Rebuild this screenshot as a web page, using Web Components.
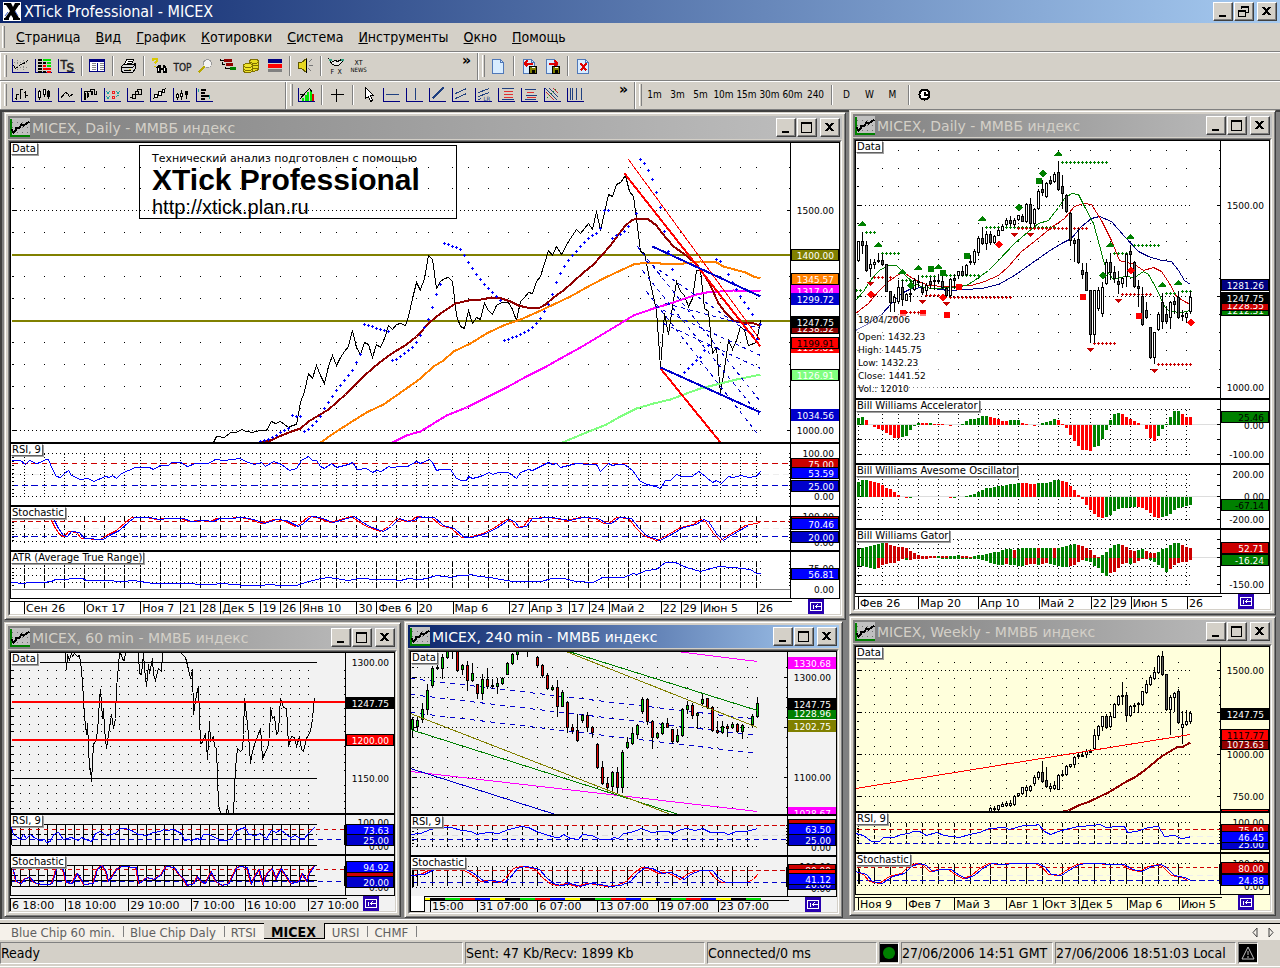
<!DOCTYPE html>
<html lang="ru">
<head>
<meta charset="utf-8">
<title>XTick Professional - MICEX</title>
<style>
  html, body { height: 100%; margin: 0; }
  body {
    --face: #d4d0c8;
    --light: #ffffff;
    --shadow: #808080;
    --dark: #404040;
    background: #d4d0c8;
    font-family: "DejaVu Sans Condensed", "DejaVu Sans", sans-serif;
    font-size: 14px;
    color: #000;
  }
</style>
</head>
<body>
<xt-app>
  <app-title slot="title">XTick Professional - MICEX</app-title>

  <menu-bar slot="menu">
    <button type="button"><u>С</u>траница</button>
    <button type="button"><u>В</u>ид</button>
    <button type="button"><u>Г</u>рафик</button>
    <button type="button"><u>К</u>отировки</button>
    <button type="button"><u>С</u>истема</button>
    <button type="button"><u>И</u>нструменты</button>
    <button type="button"><u>О</u>кно</button>
    <button type="button"><u>П</u>омощь</button>
  </menu-bar>

  <tool-row slot="tools">
    <tool-bar size="478" more>
      <tool-button icon="chart" label="Chart"></tool-button>
      <tool-button icon="quotes" label="Quotes"></tool-button>
      <tool-button icon="ts" label="Time and sales"></tool-button>
      <tool-gap></tool-gap>
      <tool-button icon="table" label="Table"></tool-button>
      <tool-gap></tool-gap>
      <tool-button icon="print" label="Print"></tool-button>
      <tool-gap></tool-gap>
      <tool-button icon="find" label="Find"></tool-button>
      <tool-button icon="top" label="Top"></tool-button>
      <tool-button icon="lens" label="Zoom"></tool-button>
      <tool-button icon="tree" label="Tree"></tool-button>
      <tool-button icon="coins" label="Portfolio"></tool-button>
      <tool-button icon="flag" label="Levels"></tool-button>
      <tool-gap></tool-gap>
      <tool-button icon="sound" label="Sound"></tool-button>
      <tool-gap></tool-gap>
      <tool-button icon="fx" label="FX"></tool-button>
      <tool-button icon="news" label="News"></tool-button>
    </tool-bar>
    <tool-bar>
      <tool-button icon="doc" label="New page"></tool-button>
      <tool-gap></tool-gap>
      <tool-button icon="docLoad" label="Load page"></tool-button>
      <tool-button icon="docSave" label="Save page"></tool-button>
      <tool-gap></tool-gap>
      <tool-button icon="docDrop" label="Delete page"></tool-button>
    </tool-bar>
  </tool-row>

  <tool-row slot="tools">
    <tool-bar size="286">
      <tool-button icon="bars" label="Bars"></tool-button>
      <tool-button icon="candles" label="Candles"></tool-button>
      <tool-button icon="line" label="Line"></tool-button>
      <tool-button icon="steps" label="Steps"></tool-button>
      <tool-button icon="xo" label="Point and figure"></tool-button>
      <tool-button icon="kagi" label="Kagi"></tool-button>
      <tool-button icon="renko" label="Renko"></tool-button>
      <tool-button icon="diamonds" label="Line break"></tool-button>
      <tool-button icon="profile" label="Profile"></tool-button>
    </tool-bar>
    <tool-bar size="349" more>
      <tool-button icon="indicator" label="Indicators"></tool-button>
      <tool-gap></tool-gap>
      <tool-button icon="cross" label="Crosshair"></tool-button>
      <tool-gap></tool-gap>
      <tool-button icon="pointer" label="Pointer"></tool-button>
      <tool-button icon="hline" label="Horizontal line"></tool-button>
      <tool-button icon="vline" label="Vertical line"></tool-button>
      <tool-button icon="trend" label="Trend line"></tool-button>
      <tool-button icon="channel" label="Channel"></tool-button>
      <tool-button icon="regress" label="Regression"></tool-button>
      <tool-button icon="fib" label="Retracement"></tool-button>
      <tool-button icon="fibx" label="Extension"></tool-button>
      <tool-button icon="fan" label="Fan"></tool-button>
      <tool-button icon="zones" label="Time zones"></tool-button>
    </tool-bar>
    <tool-bar>
      <tool-button>1m</tool-button>
      <tool-button>3m</tool-button>
      <tool-button>5m</tool-button>
      <tool-button>10m</tool-button>
      <tool-button>15m</tool-button>
      <tool-button>30m</tool-button>
      <tool-button>60m</tool-button>
      <tool-button>240</tool-button>
      <tool-gap></tool-gap>
      <tool-button>D</tool-button>
      <tool-button>W</tool-button>
      <tool-button>M</tool-button>
      <tool-gap></tool-gap>
      <tool-button icon="clock" label="Custom period"></tool-button>
    </tool-bar>
  </tool-row>

  <chart-window slot="daily" caption="MICEX, Daily - ММВБ индекс">
    <price-chart chart="daily"><chart-banner></chart-banner></price-chart>
  </chart-window>
  <chart-window slot="min60" caption="MICEX, 60 min - ММВБ индекс">
    <price-chart chart="min60"></price-chart>
  </chart-window>
  <chart-window slot="min240" caption="MICEX, 240 min - ММВБ индекс" active>
    <price-chart chart="min240"></price-chart>
  </chart-window>
  <chart-window slot="williams" caption="MICEX, Daily - ММВБ индекс">
    <price-chart chart="williams"><bar-info></bar-info></price-chart>
  </chart-window>
  <chart-window slot="weekly" caption="MICEX, Weekly - ММВБ индекс">
    <price-chart chart="weekly"></price-chart>
  </chart-window>

  <page-tabs slot="footer"></page-tabs>
  <status-bar slot="footer"></status-bar>
</xt-app>

<script>
// ---------------------------------------------------------------- helpers

function define(name, html, setup) {
  const template = document.createElement('template');
  template.innerHTML = html;
  customElements.define(name, class extends HTMLElement {
    constructor() {
      super();
      this.attachShadow({ mode: 'open' });
      this.shadowRoot.appendChild(template.content.cloneNode(true));
    }
    connectedCallback() {
      if (setup) setup(this, this.shadowRoot);
    }
  });
}

// Series are stored on a grid three times finer than the pixels.
function points(ox, oy, text) {
  return text.trim().split(/\s+/).map((pair) => {
    const [x, y] = pair.split(',').map(Number);
    return [Math.floor(ox + x / 3), Math.floor(oy + y / 3)];
  });
}
const scale = (o, list) => list.map((v) => Math.floor(o + v / 3));

const poly = (color, width, pts, dash = '') =>
  `<polyline points="${pts.map((p) => p.join()).join(' ')}" stroke="${color}" stroke-width="${width}" stroke-dasharray="${dash}"/>`;
const hline = (color, y, x1, x2, dash = '', width = 1) =>
  `<path d="M${x1} ${y}H${x2}" stroke="${color}" stroke-dasharray="${dash}" stroke-width="${width}"/>`;
const vlines = (xs, y1, y2, dash = '') =>
  `<path d="${xs.map((x) => `M${x} ${y1}V${y2}`).join('')}" stroke="#000" stroke-dasharray="${dash}"/>`;
const dots = (xs, ys) =>
  `<path d="${ys.map((y) => xs.map((x) => `M${x - 0.5} ${y}h1`).join('')).join('')}" stroke="#000"/>`;
const hdots = (ys, x1, x2) => ys.map((y) => hline('#000', y, x1 - 0.5, x2, '1 3')).join('');
const pluses = (color, pts) =>
  `<path d="${pts.map(([x, y]) => `M${x - 1.5} ${y}h3M${x} ${y - 1.5}v3`).join('')}" stroke="${color}"/>`;
const ticks = (ys, left, right, len = 3) =>
  `<path d="${ys.map((y) => `M${left} ${y}h${len}M${right - len} ${y}h${len}`).join('')}" stroke="#000"/>`;
const shift = (pts, dx) => pts.map(([x, y], i) => [i ? x + dx : x, y]);

// One candle per item: x,high,top,bottom,low and a fill letter.
const FILLS = { w: '#fff', b: '#606060', g: '#00d400', r: '#e00000' };
function candles(ox, oy, text) {
  return text.trim().split(/\s+/).map((item) => {
    const f = item.split(',');
    const [x] = scale(ox, [f[0]]);
    const [h, t, b, l] = scale(oy, f.slice(1, 5));
    return `<path d="M${x} ${h - 0.5}V${l + 0.5}" stroke="#000"/>` +
      `<rect x="${x - 1}" y="${t}" width="2" height="${Math.max(1, b - t)}" fill="${FILLS[f[5]]}" stroke="#000"/>`;
  }).join('');
}

// Histogram: green while the value grows, red while it falls.
function histogram(zero, text, red, grows) {
  let prev = null;
  let color = '#008000';
  return text.trim().split(/\s+/).map(Number).map((v, i) => {
    if (prev !== null && v !== prev) color = grows(v, prev) ? '#008000' : red;
    prev = v;
    const x = 858 + i * 4;
    const y = Math.floor(395 + v / 3);
    const z = Math.floor(395 + zero / 3);
    if (y === z) return '';
    return `<path d="M${x} ${z}V${y}" stroke="${color}" stroke-width="3"/>`;
  }).join('');
}

const up = (x, y) => `<path d="M${x} ${y - 3}L${x + 4} ${y + 2}H${x - 4}Z" fill="#008000"/>`;
const down = (x, y) => `<path d="M${x} ${y + 3}L${x + 4} ${y - 2}H${x - 4}Z" fill="#c80000"/>`;
const square = (color) => (x, y) => `<rect x="${x - 3}" y="${y - 3}" width="6" height="6" fill="${color}"/>`;
const diamond = (color) => (x, y) => `<path d="M${x} ${y - 4}l4 4l-4 4l-4 -4Z" fill="${color}"/>`;
const marks = (shape, pts) => pts.map(([x, y]) => shape(x, y)).join('');

const BLUE = '#0000ff';
const NAVY = '#0000cc';
const RED = '#ff0000';
const CRIMSON = '#cc0000';
const MAROON = '#900000';
const OLIVE = '#808000';
const MAGENTA = '#ff00ff';

// ---------------------------------------------------------------- charts

const CHARTS = {};

(function daily() {
  const a = (s) => points(0, 110, s);
  const b = (s) => points(420, 110, s);
  const c = (s) => points(0, 436, s);
  const d = (s) => points(420, 436, s);
  const xs = [24, 44, 64, 84, 104, 124, 140, 160, 180, 200, 220, 240, 260, 280, 300, 320, 336, 356, 376, 396,
    416, 428, 452, 468, 488, 508, 528, 548, 568, 588, 608, 628, 640, 660, 680, 700, 720, 740, 756];
  const ys = [167, 188, 232, 276, 298, 342, 364, 386, 408];

  const price = a(`640,996 649,978 673,981 691,968 709,966 723,957 740,963 757,967 778,960 800,962 815,935 825,940
    842,934 852,943 866,952 878,946 889,944 901,876 913,845 925,790 937,806 949,765 961,796 973,820 985,770 997,736
    1009,766 1021,743 1033,724 1045,710 1057,662 1069,712 1081,732 1093,697 1105,704 1117,741 1129,703 1141,712
    1153,685 1165,647 1177,658 1189,644 1201,640 1216,645 1225,620 1237,565 1249,518 1261,540`).concat(b(`2,537
    12,505 25,437 38,448 50,535 62,513 74,505 86,502 98,515 108,615 122,648 132,655 146,600 158,640 170,622 182,627
    193,580 205,600 217,612 230,587 245,577 265,577 278,597 290,630 302,573 313,562 325,546 338,550 350,515 362,498
    374,460 386,422 397,436 410,410 424,434 445,395 469,358 481,370 505,341 517,357 530,303 541,362 553,307 565,252
    578,258 590,224 602,217 615,195 627,243 640,260 650,325 660,425 672,430 690,520 710,600 722,772 733,610 746,673
    758,590 769,513 781,543 793,556 806,590 818,565 830,480 842,482 854,595 866,605 878,730 890,712 902,850 914,775
    926,690 938,718 950,690 962,650 974,660 986,706 1008,697 1022,632`));
  const fast = a(`780,998 810,992 845,975 875,963 900,956 925,935 955,917 985,898 1010,876 1035,853 1060,828
    1090,800 1120,772 1150,748 1180,728 1220,704 1250,680`).concat(b(`0,668 25,640 50,620 80,597 105,580 145,571
    185,567 215,561 245,565 270,573 295,587 320,592 355,594 375,584 400,563 430,542 460,515 490,488 520,463 545,435
    570,405 595,372 615,347 635,332 650,324 685,327 710,345 725,368 760,408 790,430 825,460 845,482 870,525 895,580
    915,608 940,632 965,636 990,636 1020,646`));
  const mid = a('960,998 1000,970 1050,937 1100,907 1150,882 1190,855 1240,820').concat(b(`0,805 40,770 70,750
    100,725 150,700 200,670 250,645 300,628 350,607 400,583 450,558 500,533 550,506 600,480 640,464 680,458 720,461
    790,459 840,454 890,457 910,469 975,486 1000,498 1022,504`));
  const slow = a('1178,998 1220,977 1250,966').concat(b(`0,963 40,940 80,917 140,893 200,862 260,832 320,800
    380,770 420,745 480,713 540,675 600,640 640,615 700,594 760,577 830,552 860,547 940,542 1022,543`));
  const long = b('428,998 500,966 560,942 600,920 650,896 700,880 750,868 800,850 840,834 900,820 950,808 1022,794');
  const sar = a(`780,994 792,992 804,988 817,982 830,975 842,968 854,962 866,956 878,916 890,919 902,919 913,964
    925,958 937,946 949,934 961,918 973,895 985,877 997,859 1009,841 1021,826 1033,811 1045,796 1057,781 1069,757
    1081,734 1093,643 1105,646 1117,650 1129,655 1141,658 1153,661 1165,664 1177,751 1189,748 1201,739 1213,730
    1225,721 1237,712 1249,697 1261,676 1273,652 1285,628`).concat(b(`2,676 14,652 38,592 50,553 62,523 74,400
    86,403 98,408 110,411 122,418 133,436 145,457 157,475 170,493 182,508 194,523 206,535 218,547 230,559 242,571
    253,691 265,688 277,682 289,679 301,673 313,667 325,661 338,652 350,640 361,625 373,604 385,583 397,553 409,517
    421,490 433,469 445,451 458,436 470,424 482,409 494,397 506,385 518,376 530,370 542,355 554,301 566,301 578,385
    590,376 602,373 614,364 626,349 650,310 662,148 674,160 686,181 698,208 710,247 722,292 734,364 746,425 758,478
    782,799 794,787 806,775 818,763 830,751 842,742 854,721 866,706 890,448 902,454 926,493 938,517 950,538 962,559
    974,577 986,595 998,613 1010,688 1022,643`));
  const fan = ['653,410 1018,870', '668,480 1018,915', '680,545 1018,980', '676,450 1020,690', '705,590 1020,735',
    '735,580 1020,655', '730,640 1020,775'];
  const rsi = c(`35,73 60,73 75,85 88,72 108,83 122,80 135,70 145,69 157,100 170,120 180,124 193,112 205,103
    215,118 240,129 265,127 280,136 315,122 328,124 338,118 350,126 365,112 405,94 448,93 460,99 482,88 505,87
    515,80 540,79 562,91 585,82 625,82 645,70 672,72 718,67 745,79 763,84 783,80 795,91 820,77 845,84 867,102
    890,97 903,73 925,60 937,73 950,72 962,90 972,96 993,83 1010,93 1045,86 1057,80 1072,99 1098,96 1118,110
    1130,104 1145,106 1165,90 1175,95 1200,90 1222,90 1250,77 1262,83`).concat(d(`0,83 27,71 38,79 50,104 62,99
    92,99 110,127 125,133 138,133 146,121 158,127 182,120 207,110 217,115 235,108 265,108 290,127 302,108 325,99
    337,103 362,92 385,78 398,86 410,82 422,93 445,88 470,82 505,86 528,85 541,107 566,83 577,89 590,85 614,85
    637,104 662,135 683,145 705,150 721,157 735,133 750,132 770,115 783,121 817,122 835,107 842,108 878,138 890,132
    903,143 926,120 938,125 965,117 985,123 1008,120 1022,107`));
  const stoch = c(`35,248 150,248 165,278 180,297 193,301 205,287 228,288 243,306 300,310 320,298 350,282 375,258
    395,243 440,243 470,250 500,247 540,246 565,257 600,254 630,257 650,246 680,248 720,243 750,251 785,262 820,250
    850,253 885,272 900,262 925,240 950,245 990,260 1020,250 1055,242 1075,256 1100,270 1140,287 1165,272 1190,248
    1215,255 1235,252 1250,242`).concat(d(`0,244 35,244 60,268 95,278 125,303 145,303 180,295 220,278 260,250
    275,255 290,275 310,272 327,248 385,244 440,254 480,243 525,247 550,261 565,262 590,245 625,248 645,275 670,297
    710,313 725,308 780,273 820,265 842,250 855,256 880,293 902,312 920,300 975,268 1022,260`));
  const atr = c(`35,439 70,441 85,439 130,438 155,435 165,430 200,431 215,427 248,427 258,432 310,433 370,437
    400,433 460,441 565,442 600,446 640,445 665,442 700,444 735,447 780,447 808,445 840,448 890,448 915,438 950,429
    985,424 1045,433 1075,427 1135,431 1170,430 1200,433 1225,428 1250,430`).concat(d(`0,429 20,428 50,418 95,424
    115,418 140,419 155,414 175,421 210,424 240,430 280,435 325,436 365,436 395,427 430,428 470,436 520,440 548,424
    610,425 640,412 650,414 680,402 710,400 735,379 765,380 800,395 840,405 895,391 940,393 990,400 1010,411
    1022,412`));

  CHARTS.daily = {
    left: 11, width: 779, background: '#fff',
    panes: [
      {
        top: 143, height: 299, tag: 'Data',
        art: dots(xs, ys) + hdots([210, 430], 12, 762) + ticks([167, 188, 232, 254, 276, 298, 342, 364, 386, 408], 11, 790, 2) +
          ticks([210, 430], 11, 790, 4) +
          hline(OLIVE, 254, 11, 790, '', 2) + hline(OLIVE, 320, 11, 790, '', 2) +
          poly('#000', 1, price) + poly('#80ff80', 2, long) + poly(MAGENTA, 2, slow) + poly('#ff8000', 2, mid) +
          poly(MAROON, 2, fast) + pluses(BLUE, sar) +
          fan.map((s) => poly(NAVY, 1, b(s), '4 4')).join('') +
          poly(RED, 2, b('613,190 1022,710')) + poly(RED, 2, b('722,775 900,998')) + poly(RED, 1, b('625,148 1022,690')) +
          poly(NAVY, 2, b('697,410 1022,558')) + poly(NAVY, 2, b('722,773 1022,908')),
        labels: [[210, '1500.00'], [255, '1400.00', OLIVE, '#fff', 1], [279, '1345.57', '#ff8000', '#fff', 1],
          [291, '1317.94', MAGENTA, '#fff'], [299, '1299.72', NAVY, '#fff'], [328, '1238.52', MAROON, '#fff', 1],
          [322, '1247.75', '#000', '#fff'], [347, '1199.81', RED, '#fff'], [343, '1199.91', RED, '#000', 1],
          [375, '1126.91', '#80ff80', '#fff', 1], [415, '1034.56', NAVY, '#fff'], [430, '1000.00']],
      },
      {
        top: 444, height: 61, tag: 'RSI, 9',
        art: vlines(xs, 453, 497, '1 2') + hdots([453, 474, 496], 12, 762) + hline('#eee', 474, 12, 790, '6 4') +
          hline(CRIMSON, 463, 11, 790, '6 4') + hline(NAVY, 485, 11, 790, '6 4') +
          ticks([453, 457, 461, 465, 469, 473, 477, 481, 485, 489, 493, 496], 11, 790, 2) + poly(BLUE, 1, rsi),
        labels: [[453, '100.00'], [464, '75.00', CRIMSON, '#fff', 1], [473, '53.59', BLUE, '#fff', 1],
          [486, '25.00', NAVY, '#fff', 1], [496, '0.00']],
      },
      {
        top: 507, height: 43, tag: 'Stochastic',
        art: vlines(xs, 516, 542, '5 3') + hdots([516, 534, 541], 12, 762) + hline('#eee', 528, 12, 790, '6 4') +
          hline(CRIMSON, 521, 11, 790, '5 3') + hline(NAVY, 536, 11, 790, '6 4') +
          ticks([516, 519, 522, 525, 528, 531, 534, 537, 540], 11, 790, 2) +
          poly(RED, 1, stoch) + poly(BLUE, 1, shift(stoch, 3).slice(0, -1)),
        labels: [[516, '100.00'], [522, '', CRIMSON, '#fff', 1], [542, '0.00'], [524, '70.46', BLUE, '#fff', 1],
          [537, '20.00', NAVY, '#fff', 1]],
      },
      {
        top: 552, height: 46, tag: 'ATR (Average True Range)',
        art: vlines(xs, 561, 588, '5 2') + hdots([561, 568, 575, 582], 12, 762) + hline('#808080', 589, 11, 790) +
          ticks([561, 564, 568, 572, 575, 578, 582, 585], 11, 790, 2) + poly(BLUE, 1, atr),
        labels: [[568, '75.00'], [574, '56.81', BLUE, '#fff', 1], [589, '0.00']],
      },
    ],
    times: [[24, 'Сен 26'], [84, 'Окт 17'], [140, 'Ноя 7'], [180, '21'], [200, '28'], [220, 'Дек 5'], [260, '19'],
      [280, '26'], [300, 'Янв 10'], [356, '30'], [376, 'Фев 6'], [416, '20'], [452, 'Мар 6'], [508, '27'],
      [528, 'Апр 3'], [568, '17'], [588, '24'], [608, 'Май 2'], [660, '22'], [680, '29'], [700, 'Июн 5'], [756, '26']],
  };
})();

(function williams() {
  const p = (s) => points(848, 110, s);
  const xs = scale(848, [31, 103, 151, 211, 271, 331, 391, 451, 511, 571, 631, 667, 727, 787, 847, 907, 955, 1015]);
  const minor = scale(110, [121, 175, 229, 340, 394, 449, 505, 613, 667, 721, 778]);
  const major = scale(110, [286, 558, 832]);
  // Fractal levels: y, first x, last x
  const levels = (color, list) => list.map(([y, x1, x2]) => {
    const row = [];
    for (let x = x1; x <= x2; x += 12) row.push(`${x},${y}`);
    return pluses(color, p(row.join(' ')));
  }).join('');
  const grid = (ys, zero) => {
    const rows = scale(395, ys);
    return vlines(xs, rows[0], rows[rows.length - 1], '1 3') + hdots(rows, 857, 1192) +
      hline('#ddd', Math.floor(395 + zero / 3), 857, 1219) + ticks(rows, 856, 1220, 4);
  };
  const higher = (v, prev) => v < prev;

  CHARTS.williams = {
    left: 856, width: 364, background: '#fff',
    panes: [
      {
        top: 141, height: 257, tag: 'Data',
        art: dots(xs, minor) + hdots(major, 857, 1192) + ticks(minor, 856, 1220, 2) + ticks(major, 856, 1220, 4) +
          poly('#000080', 1, p(`22,662 60,640 100,612 130,580 160,550 190,535 230,533 300,541 400,535 450,523 500,495
            550,460 600,425 640,400 670,385 700,350 730,325 755,319 790,335 830,380 870,425 900,440 940,450 970,455
            990,480 1010,510 1027,523`)) +
          poly('#c80000', 1, p(`22,610 60,580 90,545 120,515 150,492 165,488 200,508 240,525 290,529 370,526 410,515
            450,495 480,468 520,425 560,395 610,353 650,325 680,290 705,280 730,284 760,330 790,390 815,450 860,462
            885,480 915,472 940,485 965,520 985,558 1010,575 1027,582`)) +
          poly('#008000', 1, p(`22,572 45,545 60,520 75,500 95,480 120,466 145,466 158,478 175,498 200,520 225,532
            260,536 320,532 355,525 380,512 420,482 450,450 500,400 540,365 570,340 600,330 630,292 650,265 670,250
            690,253 710,290 735,340 755,405 765,450 780,490 795,508 830,500 860,503 885,484 900,492 925,535 950,590
            965,604 1000,606 1027,600`)) +
          levels('#008000', [[367, 55, 82], [430, 103, 155], [511, 163, 200], [499, 223, 270], [496, 283, 395],
            [352, 415, 630], [157, 643, 780], [430, 799, 835], [406, 859, 935], [550, 955, 990], [544, 1003, 1029],
            [541, 25, 37]]) +
          levels('#c80000', [[502, 79, 135], [607, 163, 220], [556, 235, 290], [562, 307, 490], [355, 511, 720],
            [700, 739, 800], [553, 823, 910], [763, 931, 1030]]) +
          candles(848, 110, `31,393,395,452,455,w 43,367,393,405,430,b 55,393,406,482,485,b 67,448,463,475,500,w
            79,448,457,463,475,w 91,430,450,454,457,b 103,433,451,463,465,b 115,463,464,544,545,b
            127,544,545,577,605,b 139,553,562,577,605,w 151,512,533,574,580,w 163,510,532,569,585,b
            175,550,554,570,572,w 187,515,550,553,573,b 199,505,511,538,540,w 211,497,515,518,530,b
            223,518,536,546,553,b 235,520,526,542,553,w 247,502,515,522,535,b 259,502,512,515,537,b
            271,493,510,513,520,b 283,490,513,533,535,b 295,533,534,556,558,b 307,505,508,555,560,w
            319,492,506,510,535,b 331,484,485,497,505,w 343,470,484,495,497,b 355,462,465,494,497,w
            367,437,455,458,462,b 379,417,425,456,462,w 391,380,385,426,437,w 403,352,384,401,403,b
            415,364,374,401,418,w 427,363,374,398,403,b 439,375,380,398,400,w 451,355,362,377,377,w
            463,343,348,360,360,w 475,325,331,342,345,w 487,320,331,341,345,b 499,325,332,343,350,w
            511,315,317,328,330,w 523,313,319,333,335,b 535,280,284,334,336,w 547,265,284,340,353,b
            559,295,298,340,350,w 571,238,244,296,298,w 583,212,237,248,256,b 595,217,220,259,262,w
            607,200,212,220,223,b 619,187,194,214,217,w 631,155,186,238,240,b 643,197,228,250,295,b
            655,253,256,304,307,b 667,308,310,391,406,b 679,385,391,400,455,b 691,355,388,457,460,b
            703,460,481,493,505,b 715,460,487,541,541,b 727,541,541,673,698,b 739,541,541,673,698,w
            751,533,541,595,600,w 763,517,532,610,620,w 775,448,457,521,523,w 787,430,457,487,508,b
            799,470,487,505,517,b 811,484,515,524,550,b 823,502,506,520,533,w 835,430,433,499,529,w
            847,406,424,433,470,b 859,455,457,529,531,b 871,512,529,535,589,b 883,532,560,643,645,b
            895,577,601,622,625,b 907,652,653,742,744,b 919,667,668,742,760,w 931,608,612,657,660,w
            943,550,577,634,655,b 955,589,612,634,640,b 967,573,577,622,655,w 979,562,574,584,610,b
            991,544,562,622,624,b 1003,600,616,619,630,b 1015,607,610,622,636,w 1027,544,562,604,610,w`) +
          marks(up, p('43,340 91,404 163,484 211,473 271,468 403,326 631,130 787,404 847,380 943,523 991,518')) +
          marks(down, p('67,519 139,622 223,573 295,579 499,372 547,372 727,717 811,570 919,780')) +
          marks(square('#008000'), p('246,476 283,486 354,437 570,212')) +
          marks(diamond('#008000'), p('187,526 511,292 583,190 763,496')) +
          marks(square('#ff0000'), p('162,608 222,606 294,612 330,530 702,558 870,615')) +
          marks(diamond('#ff0000'), p('67,552 283,562 451,403 847,481 1027,637')),
        labels: [[205, '1500.00'], [285, '1281.26', '#000080', '#fff', 1], [310, '1212.31', '#008000', '#fff', 1],
          [305, '1228.55', CRIMSON, '#fff', 1], [298, '1247.75', '#000', '#fff'], [387, '1000.00']],
      },
      {
        top: 400, height: 63, tag: 'Bill Williams Accelerator',
        art: grid([43, 88, 133, 178], 88) + histogram(88, `
          66 64 72 88 93 99 104 111 117 126
          126 125 120 104 91 81 82 82 81 84
          84 84 88 90 89 87 84 76 70 69
          66 60 60 63 66 69 75 75 74 74
          74 81 84 87 91 88 82 78 75 69
          72 84 96 117 137 150 162 162 165 155
          150 129 104 72 54 51 54 63 69 75
          81 88 101 126 135 122 101 84 63 45
          45 54 63 63`, RED, higher),
        labels: [[425, '0.00'], [417, '25.46', '#008000', '#000', 1], [454, '-100.00']],
      },
      {
        top: 465, height: 63, tag: 'Bill Williams Avesome Oscillator',
        art: grid([238, 271, 303, 337, 373], 303) + histogram(303, `
          260 252 252 256 258 261 267 276 281 290
          297 303 308 306 305 303 303 303 303 303
          303 303 303 307 306 305 303 300 297 294
          289 282 278 276 273 270 270 268 265 264
          262 263 263 264 264 263 262 261 259 253
          252 256 259 271 282 297 310 327 342 354
          363 366 364 357 347 341 338 336 334 333
          334 337 342 353 365 366 363 362 354 343
          337 333 330 327`, RED, higher),
        labels: [[474, '200.00'], [496, '0.00'], [505, '-67.14', '#008000', '#000', 1], [519, '-200.00']],
      },
      {
        top: 530, height: 63, tag: 'Bill Williams Gator',
        art: grid([433, 460, 486, 515, 541, 568], 486) + histogram(486, `
          460 456 453 450 447 444 438 441 447 450
          454 454 457 465 473 478 480 481 481 481
          480 481 481 480 480 477 480 480 483 480
          478 477 474 471 470 468 462 461 460 462
          460 458 457 456 456 457 456 456 456 457
          456 453 450 447 446 447 450 457 464 477
          483 477 468 456 447 444 447 453 462 465
          462 461 465 471 472 468 460 456 447 441
          441 447 453 456`, CRIMSON, higher) + histogram(486, `
          510 512 514 516 519 516 508 504 503 502
          495 490 494 492 491 491 490 489 488 488
          488 489 489 489 489 489 489 489 489 490
          490 494 497 501 506 507 507 504 507 508
          510 510 507 506 505 507 504 502 504 508
          512 513 514 511 507 498 492 497 500 510
          518 531 540 533 528 516 505 502 504 502
          496 490 489 494 500 507 516 528 519 508
          503 500 498 492`, CRIMSON, (v, prev) => v > prev),
        labels: [[548, '52.71', CRIMSON, '#fff', 1], [560, '-16.24', '#008000', '#fff', 1], [584, '-150.00']],
      },
    ],
    times: [[858, 'Фев 26'], [918, 'Мар 20'], [978, 'Апр 10'], [1038, 'Май 2'], [1090, '22'], [1110, '29'],
      [1130, 'Июн 5'], [1186, '26']],
  };
})();

(function min60() {
  const p = (s) => points(0, 618, s);
  const xs = [];
  for (let x = 11; x < 312; x += 9) xs.push(x);
  const ys = scale(618, [157, 181, 206, 228, 271, 295, 319, 341, 386, 410, 433, 458, 502, 527, 549, 572]);
  const osc = p(`38,745 45,790 60,795 72,780 88,778 100,793 120,800 145,800 155,795 165,755 175,748 188,755 195,793
    215,795 230,765 250,798 278,796 290,755 303,743 315,760 322,790 335,775 350,750 365,745 405,748 415,795 440,778
    460,785 480,770 495,745 520,747 535,770 550,785 560,802 580,795 590,775 600,790 612,795 630,762 645,790 665,802
    685,795 705,750 715,745 740,748 750,795 765,770 775,755 788,795 800,765 815,752 825,780 840,750 855,775 870,795
    895,790 903,765 918,790 925,765 940,745`);

  CHARTS.min60 = {
    left: 11, width: 334, background: '#f2f2f2',
    panes: [
      {
        top: 653, height: 160, tag: 'Data',
        art: dots(xs, ys) + ticks(ys, 11, 345, 2) + hline('#000', 662, 39, 316) + hline('#000', 778, 11, 316) +
          poly('#000', 1, p(`196,105 199,155 203,112 208,125 214,105 218,115 224,105 232,115 238,112 243,155 249,240
            254,295 258,350 262,315 268,455 272,450 275,490 280,380 288,365 294,300 298,240 302,213 306,300 309,272
            314,330 320,390 325,350 335,290 340,330 345,300 350,210 358,105 365,108 368,125 373,128 375,100`)) +
          poly('#000', 1, p(`415,105 418,165 424,170 430,105 434,150 438,205 444,140 449,165 456,122 461,170 466,188
            475,150 483,160 488,105`)) +
          poly('#000', 1, p(`545,105 556,118 565,155 572,180 577,155 581,290 590,230 596,205 600,375 608,372 616,345
            620,378 623,425 628,310 632,370 641,355 644,385 650,390 654,560 660,585 678,585 682,563 685,585 701,585
            705,450 712,390 720,400 727,395 731,350 733,240 738,290 745,350 750,435 758,400 765,370 772,355 780,330
            785,370 788,425 795,400 803,390 808,360 811,268 817,300 824,295 830,350 836,340 842,240 850,268 858,272
            862,320 866,385 875,355 884,358 890,385 897,355 903,395 910,400 918,362 930,340 936,300 943,240`)) +
          hline(RED, 701, 11, 345, '', 2) + hline(RED, 739, 11, 345, '', 2),
        labels: [[662, '1300.00'], [703, '1247.75', '#000', '#fff'], [740, '1200.00', RED, '#fff', 1],
          [778, '1150.00']],
      },
      {
        top: 815, height: 39, tag: 'RSI, 9',
        art: vlines(xs, 824, 844) + hline('#000', 824, 11, 316) + hline('#000', 834, 11, 316, '5 3') +
          hline('#000', 845, 11, 316) + hline(CRIMSON, 829, 11, 345, '4 4') + hline(NAVY, 839, 11, 345, '5 4') +
          hline('#000', 834, 343, 345, '', 20) +
          poly(BLUE, 1, p(`35,628 40,650 50,655 62,665 70,650 80,660 90,650 105,660 120,668 132,664 138,672 150,670
            160,648 175,643 190,665 200,660 215,658 225,664 235,667 245,658 255,664 265,668 275,670 285,645 300,640
            320,652 345,645 360,630 375,630 395,637 415,650 440,653 460,643 480,640 490,633 500,638 520,635 545,645
            552,668 565,664 575,668 590,660 600,664 610,650 625,648 640,655 660,668 680,667 695,660 705,640 725,632
            735,628 745,650 765,652 780,645 790,655 800,660 815,638 830,643 842,635 860,650 870,658 885,652 900,660
            912,660 925,645 944,628`)),
        labels: [[822, '100.00'], [846, '0.00'], [830, '73.63', BLUE, '#fff', 1], [840, '25.00', NAVY, '#fff', 1]],
      },
      {
        top: 856, height: 39, tag: 'Stochastic',
        art: vlines(xs, 865, 885) + hline('#000', 865, 11, 316) + hline('#000', 875, 11, 316, '6 3') +
          hline('#000', 880, 11, 316) + hline('#000', 886, 11, 316) + hline(CRIMSON, 869, 11, 345, '4 4') +
          hline(NAVY, 881, 11, 345, '5 4') + hline('#000', 875, 343, 345, '', 20) +
          poly(RED, 1, osc) + poly(BLUE, 1, shift(osc, 1)),
        labels: [[887, '0.00'], [872, '', CRIMSON, '#fff', 1], [867, '94.92', BLUE, '#fff', 1],
          [882, '20.00', NAVY, '#fff', 1]],
      },
    ],
    times: [[10, '6 18:00'], [65, '18 10:00'], [128, '29 10:00'], [190, '7 10:00'], [244, '16 10:00'],
      [307, '27 10:00']],
  };
})();

(function min240() {
  const p = (s) => points(400, 618, s);
  const xs = [];
  for (let x = 417; x < 750; x += 15) xs.push(x);
  const minor = scale(618, [148, 208, 238, 268, 298, 358, 388, 418, 448, 508, 538, 568]);
  const major = scale(618, [178, 328, 478]);
  const osc = p(`32,773 60,770 90,755 120,750 155,745 180,752 215,770 240,790 265,788 300,792 315,780 340,750
    360,745 385,748 405,755 430,780 455,798 475,803 500,796 530,805 560,795 590,800 620,805 650,802 680,790 700,765
    725,748 745,750 775,765 800,762 815,770 840,785 860,770 890,758 925,757 945,780 965,793 1000,792 1040,793
    1060,785 1072,768`);

  CHARTS.min240 = {
    left: 411, width: 376, background: '#f2f2f2', sessions: true,
    panes: [
      {
        top: 652, height: 162, tag: 'Data',
        art: dots(xs, minor) + hdots(major, 412, 758) + ticks(minor, 411, 787, 2) + ticks(major, 411, 787, 4) +
          ['32,180 1072,304', '32,230 1072,352', '32,283 1072,406'].map((s) => poly(NAVY, 1, p(s), '5 5')).join('') +
          poly(MAGENTA, 1, p('805,98 1072,130')) + poly(MAGENTA, 1, p('32,460 1072,580')) +
          poly(NAVY, 1, p('32,452 465,590')) +
          candles(400, 618, `37,300,305,333,357,g 52,300,308,325,338,g 67,255,275,304,312,g 82,200,217,275,290,g
            97,145,150,202,204,g 112,120,148,151,155,b 127,110,117,151,182,g 142,95,100,118,120,g
            157,95,90,93,120,r 172,98,100,157,160,r 187,138,143,155,168,g 202,130,143,187,218,r
            217,135,166,187,190,g 232,198,200,227,242,r 247,170,184,226,245,g 262,150,184,206,210,r
            277,185,201,206,210,r 292,182,196,206,225,g 307,177,181,197,200,g 322,133,136,168,170,g
            337,106,109,136,138,g 352,95,100,109,125,g 382,98,90,93,115,r 412,115,119,143,145,r
            427,138,142,173,178,r 442,165,172,211,214,r 457,203,209,215,217,g 472,187,208,265,296,r
            487,218,223,265,266,g 502,250,254,328,343,r 517,320,327,337,347,r 532,288,337,368,370,r
            547,288,292,308,313,g 562,284,292,328,340,r 577,325,328,343,358,r 592,377,379,448,450,r
            607,430,449,496,498,r 622,478,495,507,512,r 637,460,463,505,518,g 652,448,463,508,525,r
            667,398,403,508,524,g 682,358,374,389,391,g 697,328,346,375,378,g 712,320,322,348,362,g
            727,238,244,280,286,g 742,240,244,311,318,r 757,308,311,359,390,r 772,343,346,359,362,g
            787,313,316,346,349,g 802,300,317,327,328,r 817,333,335,370,375,r 832,334,352,371,373,g
            847,272,275,352,354,g 862,250,262,275,286,g 877,256,262,293,300,r 892,282,286,293,330,g
            907,230,244,256,259,g 922,240,241,268,270,r 937,265,268,336,340,r 952,310,337,343,345,r
            967,310,325,343,345,g 982,318,325,331,356,r 997,313,319,328,331,g 1012,316,320,340,342,r
            1027,320,323,341,360,g 1057,288,295,318,328,g 1072,237,256,295,297,g`) +
          poly('#008000', 1, p('495,98 1072,278')) + poly('#008000', 1, p('32,335 835,590')) +
          poly(OLIVE, 1, p('490,98 1072,328')) + poly(OLIVE, 1, p('32,285 810,590')),
        labels: [[663, '1330.68', MAGENTA, '#fff'], [677, '1300.00'], [713, '1228.96', '#008000', '#fff'],
          [704, '1247.75', '#000', '#fff'], [726, '1202.75', OLIVE, '#fff'], [777, '1100.00'],
          [813, '1028.67', MAGENTA, '#fff']],
      },
      {
        top: 816, height: 39, tag: 'RSI, 9',
        art: vlines(xs, 825, 846, '4 2') + hdots([846], 412, 758) + hline('#ddd', 835, 411, 787, '6 4') +
          hline(CRIMSON, 825, 411, 787, '5 3') + hline(NAVY, 839, 411, 787, '5 4') +
          ticks([825, 828, 831, 834, 837, 840, 843], 411, 787, 2) +
          poly(BLUE, 1, p(`32,650 60,645 90,635 110,632 125,628 155,629 185,638 215,641 230,648 265,644 295,645
            325,634 365,625 385,628 410,640 435,650 465,657 478,657 490,650 510,660 535,664 548,650 575,652 600,664
            630,664 640,658 655,660 670,645 690,643 710,638 725,630 755,642 780,640 805,640 818,647 845,635 860,630
            885,638 907,632 930,643 970,643 985,648 1010,640 1040,640 1072,630`)),
        labels: [[847, '0.00'], [825, '', CRIMSON, '#fff', 1], [829, '63.50', BLUE, '#fff', 1],
          [840, '25.00', NAVY, '#fff', 1]],
      },
      {
        top: 857, height: 39, tag: 'Stochastic',
        art: vlines(xs, 866, 885) + hdots([866, 876, 887], 412, 758) + hline(CRIMSON, 870, 411, 787, '5 3') +
          hline(NAVY, 882, 411, 787, '5 4') + hline('#000', 876, 411, 413, '', 20) +
          hline('#000', 876, 785, 787, '', 20) + poly(RED, 1, osc) + poly(BLUE, 1, shift(osc, 4).slice(0, -2)),
        labels: [[866, '100.00'], [888, '0.00'], [884, '20.00', NAVY, '#fff', 1], [870, '80.00', CRIMSON, '#fff', 1],
          [875, '', RED, '#fff', 1], [879, '41.12', BLUE, '#fff', 1]],
      },
    ],
    times: [[430, '15:00'], [477, '31 07:00'], [537, '6 07:00'], [597, '13 07:00'], [657, '19 07:00'],
      [717, '23 07:00']],
  };
})();

(function weekly() {
  const p = (s) => points(848, 615, s);
  const xs = scale(848, [31, 79, 127, 175, 223, 271, 319, 367, 427, 475, 535, 583, 643, 691, 739, 787, 835, 883, 931, 991]);
  const minor = scale(615, [142, 190, 217, 242, 268, 318, 343, 368, 394, 444, 470, 496, 520, 571]);
  const major = scale(615, [166, 292, 419, 544]);
  const osc = p(`22,768 45,778 65,800 95,806 125,785 160,775 180,755 205,745 225,750 245,768 270,762 300,762
    325,780 345,790 370,780 390,762 420,745 450,748 500,746 560,746 580,755 600,778 630,782 650,770 680,750 700,745
    820,748 845,762 875,768 900,755 930,747 945,758 970,782 1000,788 1022,795`);

  CHARTS.weekly = {
    left: 856, width: 364, background: '#ffffdc',
    panes: [
      {
        top: 647, height: 164, tag: 'Data',
        art: dots(xs, minor) + hdots(major, 857, 1192) + ticks(minor, 856, 1220, 2) + ticks(major, 856, 1220, 4) +
          candles(848, 615, `427,578,580,590,592,w 439,575,580,583,585,w 451,570,571,584,586,w 463,562,567,573,575,w
            475,560,566,572,574,w 487,555,565,570,573,w 499,542,544,568,570,w 511,535,536,542,544,w
            523,516,518,536,538,w 535,512,517,525,545,w 547,510,515,525,530,w 559,480,486,506,512,w
            571,468,472,487,492,w 583,440,472,499,502,b 595,457,496,514,516,b 607,506,514,521,530,w
            619,500,512,521,523,w 631,478,481,523,524,w 643,467,478,480,483,b 655,450,454,478,480,w
            667,447,449,454,458,w 679,423,427,448,456,w 691,415,420,425,430,b 703,410,420,424,424,b
            715,403,410,419,428,w 727,403,409,411,412,b 739,342,361,401,403,w 751,330,334,361,374,w
            763,303,304,335,346,w 775,298,304,337,339,b 787,292,304,335,337,w 799,266,268,306,308,w
            811,240,243,268,270,w 823,203,240,244,268,b 835,232,241,302,315,b 847,271,274,301,303,w
            859,265,270,274,292,b 871,262,265,269,293,b 883,228,230,268,270,w 895,195,208,233,235,w
            907,182,187,207,210,w 919,157,171,189,192,w 931,122,124,173,174,w 943,108,124,178,180,b
            955,177,178,284,286,b 967,241,247,284,357,w 979,231,234,247,290,w 991,222,229,322,326,b
            1003,289,327,338,386,w 1015,286,319,328,332,w 1027,290,295,319,325,w`) +
          poly(RED, 1, p('22,520 1027,358')) +
          poly(MAROON, 2, p(`630,592 660,585 690,570 725,560 780,533 835,498 860,487 890,465 940,425 985,397
            1005,393 1028,382`)),
        labels: [[670, '1500.00'], [714, '1247.75', '#000', '#fff'], [744, '1073.63', MAROON, '#fff', 1],
          [735, '1117.77', RED, '#000', 1], [754, '1000.00'], [796, '750.00'], [815, '', RED, '#fff', 1]],
      },
      {
        top: 813, height: 39, tag: 'RSI, 9',
        art: vlines(xs, 822, 843, '4 2') + hdots([822], 857, 1192) + hline('#eee', 836, 856, 1220, '6 4') +
          hline(CRIMSON, 829, 856, 1220, '5 3') + hline(NAVY, 843, 856, 1220, '5 3') +
          ticks([822, 825, 828, 831, 834, 837, 840, 843], 856, 1220, 2) +
          poly(BLUE, 1, p(`22,655 45,662 70,678 95,680 105,668 135,668 160,657 180,656 195,649 215,650 235,662 265,652
            290,660 335,668 365,658 395,653 425,640 470,636 485,642 525,630 560,632 572,628 590,650 607,657 640,645
            665,640 690,633 735,632 755,628 775,638 810,634 828,635 838,652 865,648 900,638 932,635 950,664 980,662
            1000,671 1020,667 1028,663`)),
        labels: [[822, '100.00'], [830, '75.00', CRIMSON, '#fff', 1], [844, '25.00', NAVY, '#fff', 1],
          [837, '46.45', BLUE, '#fff', 1]],
      },
      {
        top: 854, height: 40, tag: 'Stochastic',
        art: vlines(xs, 863, 883) + hdots([863, 885], 857, 1192) + hline('#eee', 875, 856, 1220, '6 4') +
          hline(CRIMSON, 867, 856, 1220, '4 3') + hline(NAVY, 880, 856, 1220, '6 3') +
          hline('#000', 876, 857, 859, '', 15) + hline('#000', 873, 1218, 1220, '', 20) +
          poly(RED, 1, osc) + poly(BLUE, 1, shift(osc, 3)),
        labels: [[863, '100.00'], [886, '0.00'], [868, '80.00', CRIMSON, '#fff', 1], [880, '24.88', BLUE, '#fff', 1]],
      },
    ],
    times: [[858, 'Ноя 9'], [906, 'Фев 7'], [954, 'Май 3'], [1006, 'Авг 1'], [1042, 'Окт 3'], [1078, 'Дек 5'],
      [1126, 'Мар 6'], [1178, 'Июн 5']],
  };
})();

// ---------------------------------------------------------------- icons

const axes = '<path d="M0 0V14H16" stroke="#000080"/>';
const page = '<path d="M2 1H10L13 4V15H2Z" fill="#d8ecff" stroke="#5078b8"/><path d="M10 1V4H13" stroke="#5078b8"/>';
const floppy = '<rect x="8" y="8" width="7" height="7" fill="#808000" stroke="#000"/><path d="M10 9H13" stroke="#fff"/><path d="M10 13H13" stroke="#000" stroke-width="3"/>';

const ICONS = {
  chart: axes + '<path d="M1 9H15M1 4H15M5 1V13M11 1V13" stroke="#888" stroke-dasharray="1 2"/><path d="M1 7L3 10L6 8L8 6L11 5L13 4L15 2" stroke="#000"/>',
  quotes: axes + '<path d="M2 1H6M2 4H6M2 7H6M2 10H6M2 13H6M7 4H10M7 10H10" stroke="#000" stroke-width="2"/><path d="M7 1H15M11 4H15M11 7H15" stroke="#00e000" stroke-width="2"/><path d="M7 7H10M7 10H15M11 13H15" stroke="#ff0000" stroke-width="2"/><path d="M7 13H10" stroke="#000" stroke-width="2"/>',
  ts: axes + '<text x="2" y="10" font-size="12" fill="#222" style="stroke:#222;stroke-width:.5px">T</text><text x="8" y="13" font-size="13" fill="#222" style="stroke:#222;stroke-width:.5px">S</text>',
  table: '<rect x="0" y="1" width="15" height="12" fill="#fff" stroke="#000080"/><path d="M0 2H15" stroke="#000080" stroke-width="3"/><path d="M8 4V13" stroke="#000080"/><path d="M2 5H6M2 7H6M2 9H6M2 11H6M10 5H14M10 7H14M10 9H14M10 11H14" stroke="#888"/>',
  print: '<path d="M4 6L6 1H13L11 6Z" fill="#fff" stroke="#000"/><path d="M1 8L3 6H13L15 5V10L12 14H2L1 12Z" fill="#d8d8d8" stroke="#000"/><path d="M1 9H12M3 12H10M7 3H11M6 5H10M12 9L15 6" stroke="#000"/><path d="M8 11H10" stroke="#d0c000"/>',
  find: '<path d="M1 2V0H5V3L3 5M3 7V8" stroke="#d8c800" stroke-width="2"/><path d="M5 14V9L7 6H9V9H11V6H13L15 9V14H11V11H9V14Z" fill="#000"/><path d="M7 9V12M13 9V12" stroke="#fff"/>',
  top: '<text x="-1" y="12" font-size="10" fill="#222" style="stroke:#222;stroke-width:.3px">TOP</text>',
  lens: '<circle cx="10" cy="5" r="4" fill="#f4f4f4" stroke="#999"/><path d="M7 8L1 14" stroke="#b8a800" stroke-width="2"/>',
  tree: '<path d="M0 0V2H4M2 3V6H4M5 8V10H9" stroke="#000"/><path d="M3 2H11M5 6H12" stroke="#900000" stroke-width="3"/><path d="M9 10H15" stroke="#008000" stroke-width="3"/>',
  coins: '<path d="M6 2Q10 -1 15 2V11Q11 14 7 12Z" fill="#e8dc20" stroke="#807000"/><path d="M0 6Q4 4 9 6V13Q4 16 0 13Z" fill="#f0e428" stroke="#807000"/><path d="M0 8Q4 10 9 8M0 11Q4 13 9 11M7 4Q11 6 15 4M9 7Q12 8 15 7M9 10Q12 11 15 10" stroke="#807000"/>',
  flag: '<path d="M1 2H15" stroke="#000080" stroke-width="4"/><path d="M1 7H15" stroke="#ff0000" stroke-width="4"/><path d="M1 12H15" stroke="#808080" stroke-width="3"/>',
  sound: '<path d="M1 4H4L9 0V14L4 10H1Z" fill="#e8d820" stroke="#605800"/><path d="M9 0V14" stroke="#000"/><path d="M11 7H15M11 4L14 1M11 10L14 13" stroke="#777"/>',
  fx: '<path d="M1 1L4 3L7 2L9 3L13 1L14 3L10 7H6L3 5Z" fill="#e8e8e8" stroke="#000"/><path d="M0 1H3M12 1H15" stroke="#30a080" stroke-width="2"/><text x="2" y="15" font-size="7" fill="#000">F</text><text x="9" y="15" font-size="7" fill="#000">X</text>',
  news: '<text x="3" y="6" font-size="7" fill="#000">XT</text><text x="-1" y="13" font-size="6" fill="#000">NEWS</text>',
  doc: page,
  docLoad: page + '<path d="M3 5H11M3 5L6 2M3 5L6 8" stroke="#e00000" stroke-width="2"/>' + floppy,
  docSave: page + '<path d="M4 5H13M13 5L10 2M13 5L10 8" stroke="#e00000" stroke-width="2"/>' + floppy,
  docDrop: page + '<path d="M5 5L11 12M11 5L5 12" stroke="#e00000" stroke-width="2"/>',
  bars: axes + '<path d="M4 6V12M2 11H4M4 7H6M8 1V11M7 9H8M8 2H10M13 3V10M11 5H13M13 8H15" stroke="#000"/>',
  candles: axes + '<path d="M4 2V12M9 1V9M13 2V11" stroke="#000"/><rect x="3" y="4" width="2" height="6" fill="#fff" stroke="#000"/><rect x="8" y="2" width="2" height="5" fill="#fff" stroke="#000"/><rect x="12" y="4" width="2" height="5" fill="#000" stroke="#000"/>',
  line: axes + '<path d="M2 11L7 5L9 6L11 9L15 6" stroke="#000"/>',
  steps: axes + '<path d="M3 12V4H6V10M6 4H9V2H13V7H15V3" stroke="#000"/><path d="M3 5V12M6 5V9M10 3V7" stroke="#000" stroke-width="2"/>',
  xo: axes + '<path d="M2 4L5 7M5 4L2 7M12 4L15 7M15 4L12 7M2 9L5 12M5 9L2 12" stroke="#20a0a0"/><path d="M8 4h2v2h-2zM8 9h2v2h-2z" stroke="#f02020"/><path d="M12 9L15 7" stroke="#20a0a0"/>',
  kagi: axes + '<path d="M2 10H5V7M5 7H8V11H5ZM8 7V4H11M8 7H11V4M10 2H14V7H11Z" stroke="#000"/>',
  renko: axes + '<path d="M2 12L5 9M8 7L10 5M13 4L15 1" stroke="#000"/><path d="M4 7H7V10H4ZM8 4H11V8H8ZM12 2H14V5H12Z" fill="#fff" stroke="#000"/>',
  diamonds: axes + '<path d="M4 5V12M8 2V12M13 3V11" stroke="#000"/><path d="M3 7H5V10H3ZM7 6H9V9H7Z" fill="#fff" stroke="#000"/><path d="M12 4H14V7H12Z" fill="#000" stroke="#000"/>',
  profile: axes + '<path d="M4 2H9M4 5H8M4 8H12M4 11H8" stroke="#000" stroke-width="2"/><path d="M2 1V4M13 7V11" stroke="#20a0a0"/>',
  indicator: axes + '<path d="M4 13V10M7 13V7M12 13V3" stroke="#00e000" stroke-width="2"/><path d="M9 13V4" stroke="#00e000" stroke-width="2"/><path d="M14 13V6" stroke="#e00000" stroke-width="2"/><path d="M1 12L8 4L11 1L14 5M1 7H6" stroke="#000"/>',
  cross: '<path d="M7 1V14M1 7H14" stroke="#000"/>',
  pointer: '<path d="M5 0V11L8 9L10 14L12 13L10 8H13Z" fill="#fff" stroke="#000"/>',
  hline: axes + '<path d="M2 7H15" stroke="#204080"/>',
  vline: axes + '<path d="M9 0V12" stroke="#204080"/>',
  trend: axes + '<path d="M3 11L14 0" stroke="#204080" stroke-width="2"/>',
  channel: axes + '<path d="M3 6L14 1M3 11L14 6" stroke="#204080"/>',
  regress: axes + '<path d="M3 5L14 1M3 9L14 5M3 12L6 11" stroke="#204080"/><text x="8" y="13" font-size="6" fill="#204080">LR</text>',
  fib: axes + '<path d="M3 1H15M3 12H15" stroke="#204080"/><path d="M5 4H14M5 7H14M5 10H14" stroke="#e03030"/>',
  fibx: axes + '<path d="M3 2H14M4 8H15M3 12H14" stroke="#204080"/><path d="M5 5H12M5 10H14" stroke="#e03030"/>',
  fan: axes + '<path d="M1 1L13 13M5 1L14 10" stroke="#204080"/><path d="M2 5L10 13M9 1L14 6" stroke="#c03030"/><path d="M2 11L12 1" stroke="#208020" stroke-dasharray="2 1"/>',
  zones: axes + '<path d="M3 0V12M5 0V12M9 0V12M14 0V12" stroke="#204080"/>',
  clock: '<circle cx="8" cy="7" r="5" fill="#fff" stroke="#000" stroke-width="2"/><path d="M8 4V7H11" stroke="#000" stroke-width="2"/>',
};

// ---------------------------------------------------------------- shell

define('xt-app', `
  <style>
    :host { display: flex; flex-direction: column; height: 100vh; overflow: hidden; background: var(--face); }
    .desktop {
      flex: 1;
      min-height: 0;
      display: grid;
      grid-template-columns: 842fr 427fr;
      gap: 3px;
      padding: 0 4px;
      background: var(--shadow);
      box-shadow: inset 2px 2px 0 var(--dark);
    }
    .column { display: flex; flex-direction: column; gap: 1px; min-height: 0; min-width: 0; }
    .left { padding: 2px 0 1px; }
    .right { padding-bottom: 3px; }
    .row { flex: 297 297 297px; display: flex; gap: 3px; padding-right: 3px; min-height: 0; }
    slot::slotted(chart-window) { min-height: 0; min-width: 0; }
    slot[name=daily]::slotted(*) { flex: 508 508 508px; }
    slot[name=min60]::slotted(*) { flex: 397 397 397px; margin: 1px 0; }
    slot[name=min240]::slotted(*) { flex: 439 439 439px; }
    slot[name=williams]::slotted(*) { flex: 505 505 505px; }
    slot[name=weekly]::slotted(*) { flex: 300 300 300px; }
  </style>
  <slot name="title"></slot>
  <slot name="menu"></slot>
  <slot name="tools"></slot>
  <main class="desktop">
    <div class="column left">
      <slot name="daily"></slot>
      <div class="row"><slot name="min60"></slot><slot name="min240"></slot></div>
    </div>
    <div class="column right">
      <slot name="williams"></slot>
      <slot name="weekly"></slot>
    </div>
  </main>
  <slot name="footer"></slot>
`);

define('caption-buttons', `
  <style>
    :host { display: flex; gap: 1px; }
    button {
      box-sizing: border-box;
      width: 20px;
      height: 19px;
      padding: 0;
      border: 1px solid;
      border-color: var(--light) var(--dark) var(--dark) var(--light);
      box-shadow: inset -1px -1px 0 var(--shadow);
      background: var(--face);
      line-height: 0;
    }
    button:last-child { margin-left: 2px; }
    svg { width: 16px; height: 15px; fill: none; stroke: #000; shape-rendering: crispEdges; }
    .restore, :host([restore]) .maximize { display: none; }
    :host([restore]) .restore { display: inline; }
  </style>
  <button type="button" aria-label="Minimize"><svg viewBox="0 0 16 15"><path d="M4 12H11" stroke-width="2"/></svg></button>
  <button type="button" aria-label="Maximize"><svg viewBox="-0.5 -0.5 16 15">
    <g class="maximize"><path d="M2 2H12V12H2Z"/><path d="M2 3H12"/></g>
    <g class="restore"><path d="M5 4V2H12V8H9M5 3H12M2 6H9V12H2ZM2 7H9"/></g>
  </svg></button>
  <button type="button" aria-label="Close"><svg viewBox="0 0 16 15"><path d="M4 3L11 11M11 3L4 11" stroke-width="2"/></svg></button>
`);

define('app-title', `
  <style>
    :host {
      display: flex;
      align-items: center;
      flex: none;
      height: 23px;
      padding: 0 3px;
      background: linear-gradient(to right, #0a246a, #a6caf0);
      color: #fff;
      font-size: 16px;
    }
    svg { width: 18px; height: 19px; margin-right: 3px; }
    .text { flex: 1; white-space: nowrap; }
  </style>
  <svg viewBox="0 0 18 19" aria-hidden="true">
    <rect width="18" height="19" fill="#fff"/>
    <path d="M1 1H8L10 5L12 1H17V3H16L12 9L16 16H17V18H10V16L8 13L6 16V18H1V16H2L7 9L3 3H1Z" fill="#000"/>
    <path d="M2 14L5 10M12 9L15 14" stroke="#4060c0"/>
  </svg>
  <span class="text"><slot></slot></span>
  <caption-buttons restore></caption-buttons>
`);

define('menu-bar', `
  <style>
    :host {
      display: flex;
      align-items: center;
      flex: none;
      gap: 15px;
      height: 28px;
      border-bottom: 1px solid var(--shadow);
      box-shadow: 0 1px 0 var(--light);
      margin-bottom: 1px;
    }
    :host::before {
      content: "";
      width: 1px;
      height: 22px;
      margin: 0 -4px 0 2px;
      border-left: 1px solid var(--light);
      border-right: 1px solid var(--shadow);
    }
    ::slotted(button) { border: 0; padding: 0; background: none; color: inherit; font: inherit; white-space: nowrap; }
  </style>
  <slot></slot>
`);

define('tool-row', `
  <style>
    :host {
      display: flex;
      flex: none;
      height: 27px;
      border-bottom: 1px solid var(--shadow);
    }
    :host(:not(:nth-of-type(2))) { margin-bottom: 1px; box-shadow: 0 1px 0 var(--light); }
  </style>
  <slot></slot>
`);

define('tool-bar', `
  <style>
    :host {
      display: flex;
      align-items: center;
      box-sizing: border-box;
      padding: 0 0 2px 8px;
      border-left: 1px solid var(--light);
      flex: none;
    }
    :host([size]) { border-right: 1px solid var(--shadow); }
    :host::before {
      content: "";
      flex: none;
      width: 1px;
      height: 22px;
      margin: 0 1px 0 -5px;
      border-left: 1px solid var(--light);
      border-right: 1px solid var(--shadow);
    }
    .more {
      display: none;
      align-self: flex-start;
      margin-left: auto;
      padding: 0 6px;
      border: 0;
      background: none;
      font: bold 14px/14px "DejaVu Sans", sans-serif;
    }
    :host([more]) .more { display: block; }
  </style>
  <slot></slot>
  <button type="button" class="more" aria-label="More buttons">»</button>
`, (host) => {
  const size = host.getAttribute('size');
  if (size) host.style.flexBasis = size + 'px';
});

define('tool-gap', `
  <style>
    :host { width: 8px; flex: none; display: flex; justify-content: center; }
    i { width: 1px; height: 20px; background: var(--shadow); box-shadow: 1px 0 0 var(--light); }
  </style>
  <i></i>
`);

define('tool-button', `
  <style>
    :host { display: block; flex: none; width: 23px; }
    button {
      display: flex;
      align-items: center;
      justify-content: center;
      width: 23px;
      height: 22px;
      padding: 0;
      border: 0;
      background: none;
      color: #000;
      font: inherit;
      font-size: 10px;
      white-space: nowrap;
    }
    svg { display: none; width: 16px; height: 16px; overflow: visible; fill: none; shape-rendering: crispEdges; }
    text { font-family: "DejaVu Sans Condensed", "DejaVu Sans", sans-serif; }
    :host([icon]) svg { display: block; }
  </style>
  <button type="button"><svg viewBox="-0.5 -0.5 16 16" aria-hidden="true"></svg><slot></slot></button>
`, (host, root) => {
  if (!host.hasAttribute('icon')) return;
  root.querySelector('svg').innerHTML = ICONS[host.getAttribute('icon')];
  root.querySelector('button').setAttribute('aria-label', host.getAttribute('label'));
});

define('chart-window', `
  <style>
    :host {
      display: flex;
      flex-direction: column;
      box-sizing: border-box;
      padding: 3px;
      border: 1px solid;
      border-color: var(--face) var(--dark) var(--dark) var(--face);
      background: var(--face);
      box-shadow: inset 1px 1px 0 var(--light), inset -1px -1px 0 var(--shadow);
    }
    header {
      display: flex;
      align-items: center;
      flex: none;
      height: 23px;
      margin-bottom: 1px;
      padding: 0 2px;
      background: linear-gradient(to right, #808080, #c0c0c0);
      color: #d4d0c8;
      font: 14px "DejaVu Sans", sans-serif;
    }
    :host([active]) header { background: linear-gradient(to right, #0a246a, #a6caf0); color: #fff; }
    svg { width: 20px; height: 19px; margin-right: 2px; flex: none; fill: none; shape-rendering: crispEdges; }
    .text { flex: 1; white-space: nowrap; overflow: hidden; }
    .client {
      flex: 1;
      min-height: 0;
      display: flex;
      border: 1px solid;
      border-color: var(--shadow) var(--light) var(--light) var(--shadow);
    }
    .inner {
      flex: 1;
      min-width: 0;
      display: flex;
      border: 1px solid;
      border-color: var(--dark) var(--face) var(--face) var(--dark);
    }
    ::slotted(*) { flex: 1; min-width: 0; }
  </style>
  <header>
    <svg viewBox="-0.5 -0.5 20 19" aria-hidden="true">
      <rect x="-1" y="-1" width="21" height="20" fill="#c0c0c0"/>
      <path d="M1 4H19M1 9H19M1 14H19" stroke="#707070" stroke-dasharray="1 4"/>
      <path d="M0 0V18M0 17H20" stroke="#008000" stroke-width="2"/>
      <path d="M1 11L3 14L5 12L6 9L9 9L11 6L13 7L16 5L19 3" stroke="#000" stroke-width="2"/>
    </svg>
    <span class="text"></span>
    <caption-buttons></caption-buttons>
  </header>
  <div class="client"><div class="inner"><slot></slot></div></div>
`, (host, root) => {
  root.querySelector('.text').textContent = host.getAttribute('caption');
});

// ---------------------------------------------------------------- chart

define('price-chart', `
  <style>
    :host {
      position: relative;
      display: flex;
      flex-direction: column;
      font-family: "DejaVu Sans", sans-serif;
    }
    .panes {
      flex: 1;
      min-height: 0;
      display: flex;
      flex-direction: column;
      gap: 2px;
      border: 1px solid #000;
      background: #000;
    }
    .pane { position: relative; display: flex; gap: 1px; min-height: 0; }
    .plot, .axis { display: block; height: 100%; background: var(--paper); overflow: hidden; }
    .plot { flex: 1; min-width: 0; fill: none; shape-rendering: crispEdges; }
    .axis { flex: none; width: 48px; font-size: 9px; }
    .axis rect { shape-rendering: crispEdges; }
    .tag {
      position: absolute;
      left: 0;
      top: 0;
      padding: 0 1px 0 0;
      border: 1px solid;
      border-color: #fff #606060 #606060 #fff;
      background: #fff;
      box-shadow: 1px 1px 0 #a0a0a0;
      font-size: 10px;
      line-height: 10px;
      white-space: nowrap;
    }
    .times { flex: none; display: flex; height: 15px; background: var(--paper); }
    .times .scale { flex: 1; min-width: 0; height: 15px; overflow: visible; font-size: 11px; }
    .scale path, .scale rect { shape-rendering: crispEdges; }
    .corner { flex: none; width: 48px; display: flex; justify-content: center; }
    button { width: 16px; height: 15px; padding: 0; border: 0; background: #2800b0; line-height: 0; }
    button svg { width: 16px; height: 15px; fill: none; stroke: #fff; shape-rendering: crispEdges; }
  </style>
  <div class="panes"></div>
  <div class="times">
    <svg class="scale"></svg>
    <div class="corner">
      <button type="button" aria-label="Scroll to the last bar"><svg viewBox="-0.5 -0.5 16 15"><path d="M2 3H13V11H2ZM5 5V9M7 7H12M9 5L7 7L9 9"/></svg></button>
    </div>
  </div>
  <slot></slot>
`, (host, root) => {
  const chart = CHARTS[host.getAttribute('chart')];
  host.style.setProperty('--paper', chart.background);

  root.querySelector('.panes').innerHTML = chart.panes.map((pane) => {
    const labels = pane.labels.map(([y, text, fill, color, framed]) => {
      const box = fill
        ? `<rect x="${framed ? 0.5 : 0}" y="${framed ? -5.5 : -6}" width="${framed ? 47 : 48}" height="${framed ? 11 : 12}" fill="${fill}" stroke="${framed ? '#000' : 'none'}"/>`
        : '';
      return `<svg y="${(y - pane.top) / pane.height * 100}%" overflow="visible">${box}` +
        `<text x="43" y="4" text-anchor="end" fill="${color || '#000'}">${text}</text></svg>`;
    }).join('');
    return `<div class="pane" style="flex:${pane.height} ${pane.height} 0">
      <svg class="plot" preserveAspectRatio="none" viewBox="${chart.left - 0.5} ${pane.top - 0.5} ${chart.width} ${pane.height}">${pane.art}</svg>
      <svg class="axis">${labels}</svg>
      <span class="tag">${pane.tag}</span>
    </div>`;
  }).join('');

  const left = chart.left - 1;
  const width = chart.width + 2;
  const marksHtml = chart.times.map(([x, text]) =>
    `<svg x="${(x - left) / width * 100}%" overflow="visible"><path d="M0.5 3V15" stroke="#000"/>` +
    `<text x="2" y="13">${text}</text></svg>`).join('');
  let strip = '';
  if (chart.sessions) {
    const colors = ['#ffff00', '#000', '#00e000', '#ff0000', '#0000ff'];
    for (let i = 0, x = 5; x < 350; i++, x += 15) {
      strip += `<rect x="${x / width * 100}%" y="1" width="${15 / width * 100}%" height="2" fill="${colors[i % 5]}"/>`;
    }
    strip += '<rect x="0.5" y="-3.5" width="14" height="18" fill="#fff" stroke="#000"/>';
  }
  root.querySelector('.scale').innerHTML =
    `<rect x="0" y="${chart.sessions ? 3 : 2}" width="100%" height="1" fill="#000"/>${marksHtml}${strip}`;
});

define('chart-banner', `
  <style>
    :host {
      position: absolute;
      left: 129px;
      top: 3px;
      box-sizing: border-box;
      width: 318px;
      height: 74px;
      padding: 6px 0 0 12px;
      border: 1px solid #000;
      font-family: "Liberation Sans", sans-serif;
      white-space: nowrap;
    }
    p { margin: 0; }
    .small { font: 11px/14px "DejaVu Sans", sans-serif; }
    .name { font-size: 30px; font-weight: bold; line-height: 28px; }
    .link { display: block; color: #000; font-size: 20px; line-height: 26px; text-decoration: none; }
  </style>
  <p class="small">Технический анализ подготовлен с помощью</p>
  <p class="name">XTick Professional</p>
  <a class="link" href="http://xtick.plan.ru">http://xtick.plan.ru</a>
`);

define('bar-info', `
  <style>
    :host {
      position: absolute;
      left: 1px;
      top: 174px;
      padding: 0 14px 0 2px;
      background: rgba(255, 255, 255, 0.5);
      font-size: 9px;
      line-height: 13px;
    }
    p { margin: 0; }
    .date { margin-bottom: 4px; }
  </style>
  <p class="date">18/04/2006</p>
  <p>Open: 1432.23</p>
  <p>High: 1445.75</p>
  <p>Low: 1432.23</p>
  <p>Close: 1441.52</p>
  <p>Vol.: 12010</p>
`);

// ---------------------------------------------------------------- footer

define('page-tabs', `
  <style>
    :host {
      display: block;
      flex: none;
      border-top: 1px solid var(--light);
      padding-top: 3px;
    }
    nav {
      display: flex;
      height: 16px;
      padding-left: 4px;
      border-top: 1px solid #000;
      background: #f5f1ea;
      font-size: 13px;
    }
    a {
      position: relative;
      padding: 0 8px 0 7px;
      color: #606060;
      line-height: 18px;
      text-decoration: none;
      white-space: nowrap;
    }
    a + a:not(.on):not(.on + a)::before {
      content: "";
      position: absolute;
      left: 0;
      top: 2px;
      width: 1px;
      height: 11px;
      background: #808080;
    }
    .on {
      margin-top: -1px;
      margin-bottom: 1px;
      background: var(--face);
      border-right: 1px solid #000;
      border-bottom: 1px solid #000;
      color: #000;
      font-size: 14px;
      font-weight: bold;
    }
    .arrows { display: flex; margin-left: auto; padding-right: 2px; }
    button { width: 15px; padding: 0; border: 0; background: none; line-height: 0; }
    svg { width: 9px; height: 11px; fill: none; stroke: #404040; }
  </style>
  <nav>
    <a href="#">Blue Chip 60 min.</a>
    <a href="#">Blue Chip Daly</a>
    <a href="#">RTSI</a>
    <a href="#" class="on">MICEX</a>
    <a href="#">URSI</a>
    <a href="#">CHMF</a>
    <a aria-hidden="true"></a>
    <span class="arrows">
      <button type="button" aria-label="Previous"><svg viewBox="0 0 9 11"><path d="M6 1V10L2 5.5Z"/></svg></button>
      <button type="button" aria-label="Next"><svg viewBox="0 0 9 11"><path d="M3 1V10L7 5.5Z"/></svg></button>
    </span>
  </nav>
`);

define('status-bar', `
  <style>
    :host {
      flex: none;
      display: grid;
      grid-template-columns: 463fr 240fr 170fr 20px 152px 181px 20px;
      gap: 2px;
      padding: 2px 22px 1px 0;
    }
    :host::after { content: ""; grid-column: 1 / -1; height: 1px; margin-right: -22px; background: var(--light); }
    div {
      box-sizing: border-box;
      height: 22px;
      border: 1px solid;
      border-color: var(--shadow) var(--light) var(--light) var(--shadow);
      line-height: 20px;
      white-space: nowrap;
      overflow: hidden;
    }
    svg { display: block; width: 18px; height: 18px; margin-top: 1px; }
  </style>
  <div>Ready</div>
  <div>Sent: 47 Kb/Recv: 1899 Kb</div>
  <div>Connected/0 ms</div>
  <div><svg viewBox="0 0 18 18"><rect width="18" height="18" fill="#000"/><circle cx="9" cy="9" r="6" fill="#008000"/></svg></div>
  <div>27/06/2006 14:51 GMT</div>
  <div>27/06/2006 18:51:03 Local</div>
  <div><svg viewBox="0 0 18 18"><rect width="18" height="18" fill="#000"/><path d="M9 3L15 15H3Z" fill="none" stroke="#c0c0c0"/><path d="M9 7V11M9 12V14" stroke="#c0c0c0"/></svg></div>
`);
</script>
</body>
</html>
